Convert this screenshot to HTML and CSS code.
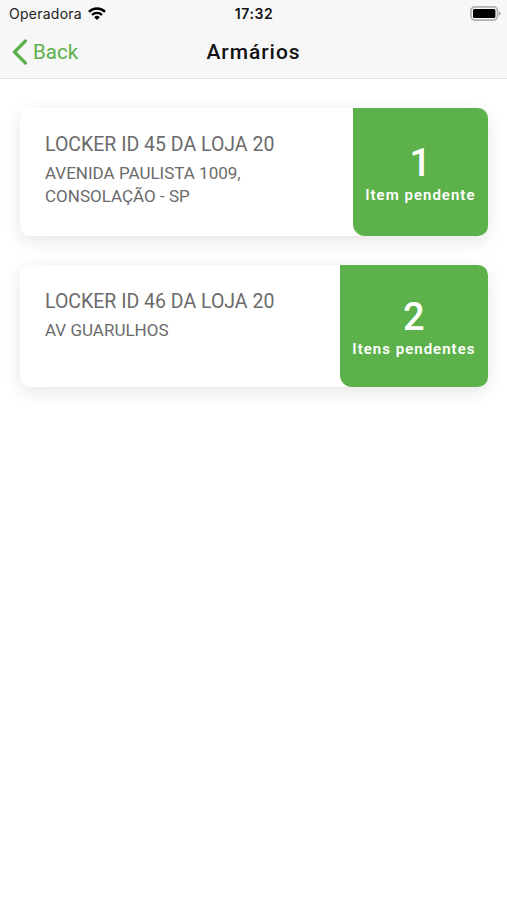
FILE: index.html
```html
<!DOCTYPE html>
<html lang="pt-BR">
<head>
    <meta charset="UTF-8">
    <meta name="viewport" content="width=device-width, initial-scale=1.0">
    <title>Armários</title>
    <link rel="stylesheet" href="styles.css">
</head>
<body>
    <header class="header">
        <div class="status-bar">
            <div class="carrier">
                <span>Operadora</span>
                <svg class="wifi" viewBox="0 0 18 13" width="18" height="13">
                    <path d="M1 4.8 A11.4 11.4 0 0 1 17 4.8" fill="none" stroke="#000" stroke-width="2.5"/>
                    <path d="M4 8 A7.1 7.1 0 0 1 14 8" fill="none" stroke="#000" stroke-width="2.3"/>
                    <path d="M9 13 L6.2 10.2 A4 4 0 0 1 11.8 10.2 Z"/>
                </svg>
            </div>
            <span class="time">17:32</span>
            <svg class="battery" viewBox="0 0 31 15" width="31" height="15">
                <rect x="0.9" y="0.9" width="26.6" height="13.2" rx="4" fill="#f7f7f7" stroke="#b0b0b0" stroke-width="1.7"/>
                <rect x="3" y="3" width="22.4" height="9" rx="1.5"/>
                <path d="M28.8 5.2 Q30.8 6.2 30.8 7.5 Q30.8 8.8 28.8 9.8 Z" fill="#a5a5a5"/>
            </svg>
        </div>
        <div class="nav-bar">
            <a class="back">
                <svg viewBox="0 0 16 26" width="16" height="26">
                    <path d="M13.4 2 L2.5 13 L13.4 24" fill="none" stroke="#5bb14b" stroke-width="3.2" stroke-linecap="round" stroke-linejoin="round"/>
                </svg>
                <span>Back</span>
            </a>
            <h1 class="title">Armários</h1>
        </div>
    </header>

    <main class="lockers">
        <div class="card">
            <div class="info">
                <h2 class="name">LOCKER ID 45 DA LOJA 20</h2>
                <p class="address">AVENIDA PAULISTA 1009,<br>CONSOLAÇÃO - SP</p>
            </div>
            <div class="pending">
                <span class="count">1</span>
                <span class="label">Item pendente</span>
            </div>
        </div>
        <div class="card card-small">
            <div class="info">
                <h2 class="name">LOCKER ID 46 DA LOJA 20</h2>
                <p class="address">AV GUARULHOS</p>
            </div>
            <div class="pending">
                <span class="count">2</span>
                <span class="label">Itens pendentes</span>
            </div>
        </div>
    </main>
</body>
</html>
```
FILE: styles.css
```css
* {
    box-sizing: border-box;
}

body {
    margin: 0;
    min-height: 100vh;
    background-color: #fff;
    font-family: Roboto, "Liberation Sans", sans-serif;
}

.header {
    height: 79px;
    background-color: #f7f7f7;
    border-bottom: 1px solid #e2e2e2;
}

.status-bar {
    display: grid;
    grid-template-columns: 1fr auto 1fr;
    align-items: center;
    height: 27px;
    padding: 0 6px 0 9px;
    font-family: Inter, sans-serif;
    font-size: 14px;
    color: #222;
}

.carrier {
    display: flex;
    align-items: center;
    gap: 6px;
    letter-spacing: 0.25px;
}

.wifi {
    margin-top: -1px;
}

.time {
    margin-right: 2px;
    font-weight: 600;
    letter-spacing: 0.6px;
    color: #111;
}

.battery {
    justify-self: end;
    margin-top: -1px;
}

.nav-bar {
    display: grid;
    grid-template-columns: 1fr auto 1fr;
    align-items: center;
    height: 50px;
    padding: 0 12px;
}

.back {
    display: flex;
    align-items: center;
    gap: 5px;
    font-size: 20.5px;
    color: #5bb14b;
}

.title {
    margin: 0;
    font-size: 21px;
    font-weight: 500;
    letter-spacing: 0.95px;
    color: #111;
}

.lockers {
    display: flex;
    flex-direction: column;
    gap: 29px;
    padding: 29px 19px 0 20px;
}

.card {
    display: flex;
    justify-content: space-between;
    height: 128px;
    border-radius: 10px;
    background-color: #fff;
    box-shadow: 0 5px 18px rgba(0, 0, 0, 0.1);
}

.card-small {
    height: 122px;
}

.info {
    padding: 25px 0 0 25px;
    color: #6b6b6b;
}

.name {
    margin: 0;
    font-size: 19.5px;
    font-weight: 400;
    line-height: 23px;
}

.address {
    margin: 6px 0 0;
    font-size: 17px;
    line-height: 23px;
}

.pending {
    display: flex;
    flex-direction: column;
    align-items: center;
    justify-content: center;
    padding: 3px 12.5px 0 12px;
    border-radius: 0 10px 10px 12px;
    background-color: #5db14b;
    color: #fff;
}

.count {
    font-size: 38px;
    font-weight: 500;
    line-height: 42px;
}

.label {
    font-size: 15px;
    font-weight: 600;
    line-height: 22px;
    letter-spacing: 1.02px;
}
```
